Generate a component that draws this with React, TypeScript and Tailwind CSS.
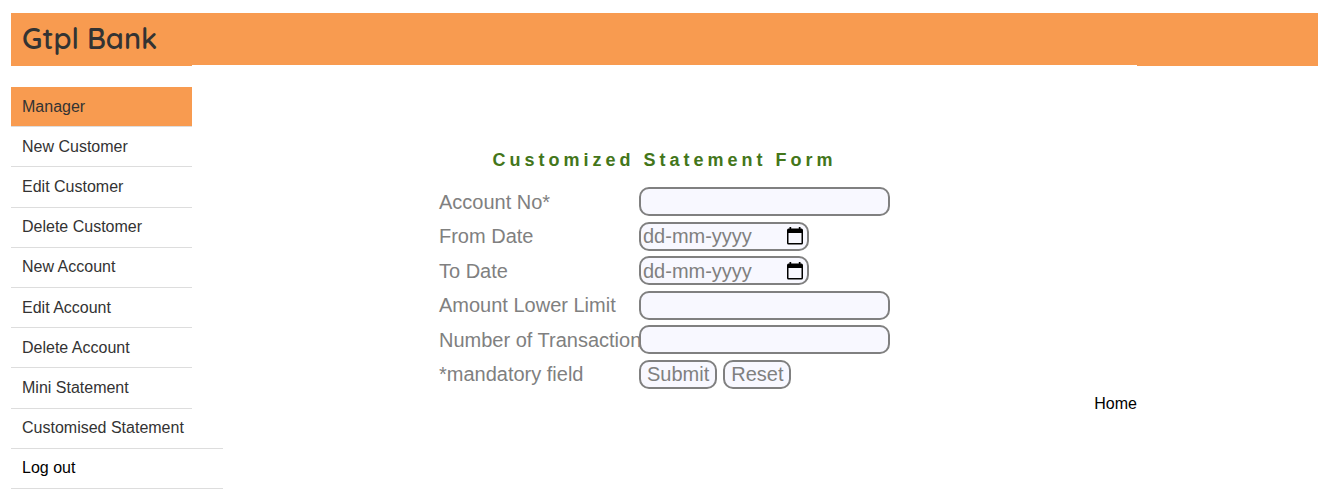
import { useRef } from "react";

const links = [
  "New Customer",
  "Edit Customer",
  "Delete Customer",
  "New Account",
  "Edit Account",
  "Delete Account",
  "Mini Statement",
];

const control =
  "block h-[29px] rounded-[10px] border-2 border-[#808080] bg-[#f8f8ff] text-[20px] leading-6 text-[#808080] outline-none placeholder:text-[#808080] placeholder:opacity-100";

function TextField({ id, label }: { id: string; label: string }) {
  return (
    <>
      <label htmlFor={id}>{label}</label>
      <input id={id} name={id} type="text" className={`${control} w-[251px] px-1`} />
    </>
  );
}

function DateField({ id, label }: { id: string; label: string }) {
  const input = useRef<HTMLInputElement>(null);
  return (
    <>
      <label htmlFor={id}>{label}</label>
      <div className={`${control} flex w-[170px] items-center justify-between pl-0.5 pr-1`}>
        <input
          ref={input}
          id={id}
          name={id}
          type="text"
          placeholder="dd-mm-yyyy"
          className="w-[124px] bg-transparent leading-6 outline-none placeholder:text-[#808080] placeholder:opacity-100"
        />
        <button type="button" aria-label={`Choose ${label}`} onClick={() => input.current?.focus()}>
          <svg width="16" height="18" viewBox="0 0 16 18" className="block" aria-hidden="true">
            <path
              fill="#000"
              fillRule="evenodd"
              d="M2.5 0h1.7v1.6h7.6V0h1.7v1.6h.9A1.6 1.6 0 0 1 16 3.2v12.7a1.6 1.6 0 0 1-1.6 1.6H1.6A1.6 1.6 0 0 1 0 15.9V3.2a1.6 1.6 0 0 1 1.6-1.6h.9zM1.5 6v10h13V6z"
            />
          </svg>
        </button>
      </div>
    </>
  );
}

export default function App() {
  return (
    <div className="bg-white pt-[13px] pr-[5px] pl-[11px] font-['Liberation_Sans',Arial,sans-serif] text-base text-[#333]">
      <header className="h-[53px] bg-[#f89b50] px-[11px]">
        <h1 className="font-['Quicksand',Lato,sans-serif] text-[29px] leading-[50px] font-semibold text-[#333]">Gtpl Bank</h1>
      </header>

      <div className="flex items-start">
        <nav className="mt-[21px] w-[181px] shrink-0">
          <ul className="grid min-h-[402px] auto-rows-fr grid-cols-1">
            <li className="flex items-center border-b border-[#ddd] bg-[#f89b50] px-[11px]">
              <a href="#manager">Manager</a>
            </li>
            {links.map((text) => (
              <li key={text} className="flex items-center border-b border-[#ddd] px-[11px]">
                <a href="#menu">{text}</a>
              </li>
            ))}
            <li className="relative z-10 -mr-[31px] flex items-center border-b border-[#ddd] px-[11px] whitespace-nowrap">
              <a href="#statement">Customised Statement</a>
            </li>
            <li className="relative z-10 -mr-[31px] flex items-center border-b border-[#ddd] px-[11px] text-black">
              <a href="#logout">Log out</a>
            </li>
          </ul>
        </nav>

        <main className="-mt-px w-[72.3%] bg-white pt-[84px]">
          <form className="mx-auto w-fit" onSubmit={(e) => e.preventDefault()}>
            <h2 className="text-center text-[18px] leading-[22px] font-bold tracking-[4px] text-[#43761a]">
              Customized Statement Form
            </h2>
            <div className="mt-4 grid min-h-[202px] grid-cols-[200px_auto] content-between items-center text-[20px] leading-7 whitespace-nowrap text-[#808080]">
              <TextField id="accountno" label="Account No*" />
              <DateField id="fdate" label="From Date" />
              <DateField id="tdate" label="To Date" />
              <TextField id="amountlowerlimit" label="Amount Lower Limit" />
              <TextField id="numtransaction" label="Number of Transaction" />
              <span>*mandatory field</span>
              <div className="flex gap-1.5">
                <button type="submit" className={`${control} px-1.5`}>
                  Submit
                </button>
                <button type="reset" className={`${control} px-1.5`}>
                  Reset
                </button>
              </div>
            </div>
          </form>
          <p className="mt-[3px] text-right leading-6 text-black">
            <a href="#home">Home</a>
          </p>
        </main>
      </div>
    </div>
  );
}
